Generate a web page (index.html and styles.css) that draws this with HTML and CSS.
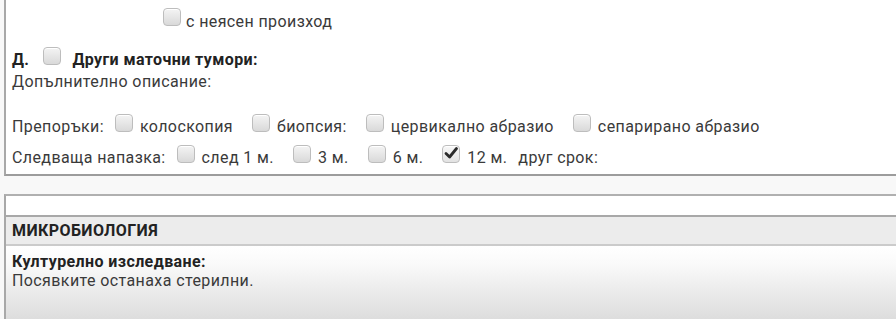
FILE: index.html
```html
<!DOCTYPE html>
<html lang="bg">
<head>
  <meta charset="UTF-8">
  <title>Резултат</title>
  <link rel="stylesheet" href="styles.css">
</head>
<body>
  <div class="panel top-panel">
    <div class="row row-unclear"><span class="cb"></span><span>с неясен произход</span></div>
    <div class="row row-d"><b>Д.</b><span class="cb"></span><b>Други маточни тумори:</b></div>
    <div class="row row-desc">Допълнително описание:</div>
    <div class="row row-rec">
      <span class="head">Препоръки:</span>
      <span class="cb"></span><span class="lbl">колоскопия</span>
      <span class="cb"></span><span class="lbl">биопсия:</span>
      <span class="cb"></span><span class="lbl">цервикално абразио</span>
      <span class="cb"></span><span class="lbl">сепарирано абразио</span>
    </div>
    <div class="row row-next">
      <span class="head">Следваща напазка:</span>
      <span class="cb"></span><span class="lbl">след 1 м.</span>
      <span class="cb"></span><span class="lbl">3 м.</span>
      <span class="cb"></span><span class="lbl">6 м.</span>
      <span class="cb checked"><svg viewBox="0 0 18 18" width="18" height="18"><path d="M4 9.5 L7.6 13 L14.5 4.5" fill="none" stroke="#2a2a2a" stroke-width="2.8" stroke-linecap="round" stroke-linejoin="round"/></svg></span><span class="lbl short">12 м.</span>
      <span>друг срок:</span>
    </div>
  </div>

  <div class="panel micro">
    <div class="blank"></div>
    <div class="micro-head">МИКРОБИОЛОГИЯ</div>
    <div class="micro-body">
      <div class="micro-title">Културелно изследване:</div>
      <div>Посявките останаха стерилни.</div>
    </div>
  </div>
</body>
</html>
```

FILE: styles.css
```css
body {
  margin: 0; background: #f8f8f8;
  font-family: Roboto, "Liberation Sans", Arial, sans-serif; font-size: 16px; letter-spacing: 0.4px; color: #3a3a3a;
  overflow: hidden;
}
b { color: #222; }
.panel { margin-left: 4px; border-left: 2px solid #a8a8a8; }
.top-panel { background: #fff; border-bottom: 2px solid #9c9c9c; padding-left: 6px; height: 176px; box-sizing: border-box; overflow: hidden; }
.row { display: flex; align-items: center; white-space: nowrap; height: 20px; line-height: 20px; }
.cb {
  display: inline-block; flex: none; width: 18px; height: 18px; box-sizing: border-box;
  border: 1px solid #bdbdbd; border-radius: 4px;
  background: linear-gradient(#f4f4f4, #d9d9d9);
  box-shadow: inset 0 1px 0 #fff;
  margin: 0 7px 8px 0;
}
.cb svg { display: block; margin: -2px 0 0 -1px; }
.checked { background: linear-gradient(#f8f8f8, #e2e2e2); }
.row-unclear { padding-left: 151px; margin-top: 12px; }
.row-unclear .cb { margin-bottom: 10px; margin-right: 5px; }
.row-d { margin-top: 18px; }
.row-d .cb { margin: 0 11px 8px 14px; }
.row-desc { margin-top: 2px; }
.row-rec { margin-top: 25px; }
.row-next { margin-top: 11px; }
.head { margin-right: 11px; }
.lbl { margin-right: 19px; }
.lbl.short { margin-right: 11px; }
.micro { margin-top: 18px; border-top: 2px solid #b0b0b0; }
.blank { height: 19px; background: #fff; border-bottom: 2px solid #a8a8a8; }
.micro-head {
  height: 27px; background: #ececec; border-bottom: 2px solid #cbcbcb;
  font-weight: bold; padding-left: 6px; display: flex; align-items: center; color: #222;
}
.micro-body {
  padding: 6px 6px 0; height: 80px;
  background: linear-gradient(#fff 0%, #fafafa 20%, #d6d6d6 100%);
  line-height: 19px;
}
.micro-title { font-weight: bold; color: #222; }
```
